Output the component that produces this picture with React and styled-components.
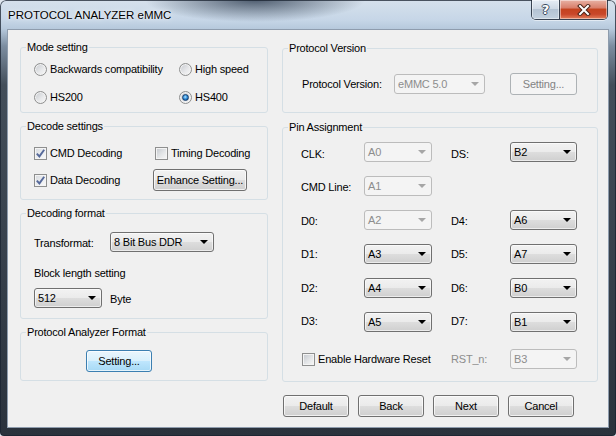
import React from "react";
import styled, { createGlobalStyle, css } from "styled-components";

const GlobalStyle = createGlobalStyle`
  html, body {
    margin: 0;
    padding: 0;
  }
  body {
    width: 616px;
    height: 436px;
    overflow: hidden;
    background: #dfe6ee;
    font-family: "Liberation Sans", Arial, sans-serif;
    font-size: 11px;
    letter-spacing: -0.2px;
    color: #000;
  }
`;

const Window = styled.div`
  width: 616px;
  height: 436px;
  box-sizing: border-box;
  display: flex;
  flex-direction: column;
  padding: 0 7px 8px 7px;
  border-radius: 6px 6px 4px 4px;
  box-shadow: inset 0 0 0 1px rgba(25, 35, 48, 0.75);
  background:
    radial-gradient(ellipse 110px 22px at 255px 0px, rgba(45, 60, 80, 0.8), rgba(45, 60, 80, 0) 100%),
    linear-gradient(180deg, #d6e1ec 0px, #c6d6e7 20px, #b6c9dc 29px, #7c8da0 46px, #434e5a 85px, #2a323c 100%);
`;

const TitleBar = styled.div`
  height: 29px;
  display: flex;
  justify-content: space-between;
  align-items: flex-start;
`;

const Title = styled.div`
  padding: 8px 0 0 1px;
  font-size: 11.5px;
  letter-spacing: 0;
  line-height: 14px;
  color: #000;
  text-shadow: 0 0 6px rgba(255, 255, 255, 0.9), 0 0 2px rgba(255, 255, 255, 0.8);
`;

const Caption = styled.div`
  display: flex;
  height: 19px;
  margin-right: 1px;
  border: 1px solid rgba(30, 40, 55, 0.85);
  border-top: none;
  border-radius: 0 0 5px 5px;
  overflow: hidden;
  box-shadow: 0 1px 0 rgba(255, 255, 255, 0.5);
`;

const CaptionButton = styled.div`
  width: ${(p) => p.$w}px;
  display: flex;
  align-items: center;
  justify-content: center;
  box-shadow: inset 0 0 0 1px rgba(255, 255, 255, 0.45);
  ${(p) =>
    p.$close
      ? css`
          background: linear-gradient(180deg, #e8b2a4 0%, #d9806c 40%, #c4431f 50%, #c9472a 75%, #e27f5c 100%);
        `
      : css`
          border-right: 1px solid rgba(30, 40, 55, 0.85);
          background: linear-gradient(180deg, #e6edf5 0%, #cfd9e5 45%, #b4c3d3 50%, #c3d1df 100%);
        `}
`;

const HelpGlyph = styled.span`
  font-family: "DejaVu Sans", sans-serif;
  font-weight: bold;
  font-size: 13px;
  line-height: 13px;
  color: #fff;
  text-shadow: -1px 0 #3b4a5e, 1px 0 #3b4a5e, 0 -1px #3b4a5e, 0 1px #3b4a5e;
`;

const Client = styled.div`
  flex: 1;
  box-sizing: border-box;
  border: 1px solid #8e9cad;
  background: #f0f0f0;
  display: grid;
  grid-template-columns: 248px 316px;
  grid-template-rows: auto auto;
  column-gap: 14px;
  align-content: start;
  padding: 17px 0 0 12px;
`;

const Column = styled.div`
  display: flex;
  flex-direction: column;
  gap: ${(p) => p.$gap}px;
  margin-top: ${(p) => p.$top || 0}px;
`;

const Group = styled.div`
  box-sizing: border-box;
  height: ${(p) => p.$h}px;
  border: 1px solid #d5dfe5;
  border-radius: 3px;
  padding-left: ${(p) => p.$pl || 0}px;
`;

const Legend = styled.div`
  display: table;
  margin: -7px 0 0 ${(p) => 5 - (p.$pl || 0)}px;
  padding: 0 1px;
  line-height: 13px;
  background: #f0f0f0;
`;

const RadioGrid = styled.div`
  display: grid;
  grid-template-columns: 145px auto;
  row-gap: 12px;
  margin-top: 7px;
`;

const DecodeGrid = styled.div`
  display: grid;
  grid-template-columns: 119px auto;
  grid-template-rows: 16px 22px;
  row-gap: 8px;
  align-items: center;
  margin-top: 12px;
`;

const Option = styled.label`
  display: flex;
  align-items: center;
  gap: 3px;
  height: 16px;
  white-space: nowrap;
  margin-left: ${(p) => p.$ml || 0}px;
  grid-column: ${(p) => p.$span || "auto"};
  color: ${(p) => (p.$disabled ? "#8d8d8d" : "#000")};
`;

const RadioDot = styled.span`
  flex: 0 0 13px;
  box-sizing: border-box;
  width: 13px;
  height: 13px;
  border-radius: 50%;
  border: 1px solid #8e8f8f;
  background: linear-gradient(135deg, #c6c9ce 0%, #e9eaec 60%, #f7f7f7 100%);
  box-shadow: inset 0 0 0 1px #f2f2f2;
  display: flex;
  align-items: center;
  justify-content: center;
  &::after {
    content: "";
    display: ${(p) => (p.$on ? "block" : "none")};
    width: 7px;
    height: 7px;
    box-sizing: border-box;
    border-radius: 50%;
    border: 1px solid #173f6d;
    background: radial-gradient(circle at 45% 40%, #bfe6ff 0%, #4aa3e6 35%, #1767b4 70%, #0b3f78 100%);
  }
`;

const Box = styled.span`
  flex: 0 0 13px;
  box-sizing: border-box;
  width: 13px;
  height: 13px;
  border: 1px solid #8e8f8f;
  background: linear-gradient(135deg, #c3c7cd 0%, #e4e6e8 55%, #f8f8f8 100%);
  box-shadow: inset 0 0 0 1px #f4f4f4;
  display: flex;
  align-items: center;
  justify-content: center;
  ${(p) =>
    p.$on &&
    css`
      background: linear-gradient(135deg, #d6d9de 0%, #eceef0 55%, #fafafa 100%);
    `}
`;

const Radio = ({ on, children }) => (
  <Option>
    <RadioDot $on={on} />
    {children}
  </Option>
);

const Check = ({ on, children, ml, span }) => (
  <Option $ml={ml} $span={span}>
    <Box $on={on}>
      {on && (
        <svg width="11" height="11" viewBox="0 0 11 11">
          <path d="M1.8 5.6 L4.4 8.4 L9.2 1.8" fill="none" stroke="#56699a" strokeWidth="1.9" />
        </svg>
      )}
    </Box>
    {children}
  </Option>
);

const Button = styled.button`
  box-sizing: border-box;
  width: ${(p) => p.$w}px;
  height: 22px;
  margin: ${(p) => p.$m || 0};
  padding: 0;
  font-family: inherit;
  font-size: 11px;
  letter-spacing: -0.2px;
  color: #000;
  border: 1px solid #707070;
  border-radius: 3px;
  background: linear-gradient(180deg, #f2f2f2 0%, #ebebeb 48%, #dddddd 52%, #cfcfcf 100%);
  box-shadow: inset 0 0 0 1px rgba(255, 255, 255, 0.7);
  ${(p) =>
    p.$hot &&
    css`
      border-color: #3c7fb1;
      background: linear-gradient(180deg, #eaf6fd 0%, #d9f0fc 48%, #bee6fd 52%, #a7d9f5 100%);
    `}
  ${(p) =>
    p.$disabled &&
    css`
      border-color: #adb2b5;
      background: #f4f4f4;
      color: #838383;
      box-shadow: none;
    `}
`;

const ComboBox = styled.div`
  box-sizing: border-box;
  width: ${(p) => p.$w}px;
  height: 20px;
  display: flex;
  align-items: center;
  justify-content: space-between;
  padding: 0 5px 0 3px;
  border: 1px solid #707070;
  border-radius: 3px;
  background: linear-gradient(180deg, #f2f2f2 0%, #ebebeb 48%, #dddddd 52%, #cfcfcf 100%);
  box-shadow: inset 0 0 0 1px rgba(255, 255, 255, 0.6);
  ${(p) =>
    p.$disabled &&
    css`
      border-color: #bcbcbc;
      background: #f4f4f4;
      color: #8d8d8d;
      box-shadow: none;
    `}
`;

const Arrow = styled.span`
  width: 0;
  height: 0;
  border-left: 4px solid transparent;
  border-right: 4px solid transparent;
  border-top: 4px solid ${(p) => (p.$disabled ? "#a6a6a6" : "#000")};
`;

const Combo = ({ value, w, disabled }) => (
  <ComboBox $w={w} $disabled={disabled}>
    <span>{value}</span>
    <Arrow $disabled={disabled} />
  </ComboBox>
);

const Row = styled.div`
  display: flex;
  align-items: center;
  height: ${(p) => p.$h || 20}px;
  margin-top: ${(p) => p.$mt || 0}px;
`;

const Text = styled.span`
  display: block;
  width: ${(p) => (p.$w ? `${p.$w}px` : "auto")};
  margin-left: ${(p) => p.$ml || 0}px;
  line-height: 16px;
  white-space: nowrap;
  color: ${(p) => (p.$disabled ? "#8d8d8d" : "#000")};
  padding-top: ${(p) => Math.max(0, (p.$dy || 0) * 2)}px;
  padding-bottom: ${(p) => Math.max(0, -(p.$dy || 0) * 2)}px;
`;

const PinList = styled.div`
  display: flex;
  flex-direction: column;
  gap: 14px;
  margin-top: 8px;
`;

const PinRow = styled.div`
  display: grid;
  grid-template-columns: 63px 87px 59px 67px;
  align-items: center;
  height: 20px;
  margin-top: ${(p) => p.$mt || 0}px;
`;

const Footer = styled.div`
  grid-column: 1 / span 2;
  display: flex;
  justify-content: flex-end;
  gap: 9px;
  margin-top: 13px;
  padding-right: 24px;
`;

const pins = [
  { l: "CLK:", a: "A0", ad: true, r: "DS:", b: "B2", dy: 2 },
  { l: "CMD Line:", a: "A1", ad: true, dy: 1 },
  { l: "D0:", a: "A2", ad: true, r: "D4:", b: "A6", dy: 1 },
  { l: "D1:", a: "A3", r: "D5:", b: "A7", dy: 0 },
  { l: "D2:", a: "A4", r: "D6:", b: "B0", dy: 0 },
  { l: "D3:", a: "A5", r: "D7:", b: "B1", dy: -1 },
];

const CloseIcon = () => (
  <svg width="14" height="12" viewBox="0 0 14 12">
    <path d="M3 2 L11 10 M11 2 L3 10" stroke="#4a2418" strokeWidth="4" strokeLinecap="square" />
    <path d="M3 2 L11 10 M11 2 L3 10" stroke="#ffffff" strokeWidth="2" strokeLinecap="square" />
  </svg>
);

export default function App() {
  return (
    <>
      <GlobalStyle />
      <Window>
        <TitleBar>
          <Title>PROTOCOL ANALYZER eMMC</Title>
          <Caption>
            <CaptionButton $w={27}>
              <HelpGlyph>?</HelpGlyph>
            </CaptionButton>
            <CaptionButton $w={47} $close>
              <CloseIcon />
            </CaptionButton>
          </Caption>
        </TitleBar>

        <Client>
          <Column $gap={13}>
            <Group $h={66} $pl={13}>
              <Legend $pl={13}>Mode setting</Legend>
              <RadioGrid>
                <Radio>Backwards compatibility</Radio>
                <Radio>High speed</Radio>
                <Radio>HS200</Radio>
                <Radio on>HS400</Radio>
              </RadioGrid>
            </Group>

            <Group $h={74} $pl={13}>
              <Legend $pl={13}>Decode settings</Legend>
              <DecodeGrid>
                <Check on>CMD Decoding</Check>
                <Check ml={2}>Timing Decoding</Check>
                <Check on>Data Decoding</Check>
                <Button $w={94}>Enhance Setting...</Button>
              </DecodeGrid>
            </Group>

            <Group $h={106} $pl={13}>
              <Legend $pl={13}>Decoding format</Legend>
              <Row $mt={12}>
                <Text $w={76} $dy={0.5}>Transformat:</Text>
                <Combo value="8 Bit Bus DDR" w={104} />
              </Row>
              <Row $mt={13} $h={16}>
                <Text>Block length setting</Text>
              </Row>
              <Row $mt={7}>
                <Combo value="512" w={68} />
                <Text $ml={8} $dy={1}>Byte</Text>
              </Row>
            </Group>

            <Group $h={49} $pl={65}>
              <Legend $pl={65}>Protocol Analyzer Format</Legend>
              <Button $w={66} $hot $m="11px 0 0 0">
                Setting...
              </Button>
            </Group>
          </Column>

          <Column $gap={14} $top={1}>
            <Group $h={65} $pl={19}>
              <Legend $pl={19}>Protocol Version</Legend>
              <Row $mt={18} $h={22}>
                <Text $w={92}>Protocol Version:</Text>
                <Combo value="eMMC 5.0" w={91} disabled />
                <Button $w={67} $disabled $m="0 0 0 25px">
                  Setting...
                </Button>
              </Row>
            </Group>

            <Group $h={255} $pl={18}>
              <Legend $pl={18}>Pin Assignment</Legend>
              <PinList>
                {pins.map((p) => (
                  <PinRow key={p.l}>
                    <Text $dy={p.dy}>{p.l}</Text>
                    <Combo value={p.a} w={68} disabled={p.ad} />
                    {p.r ? <Text $dy={p.dy}>{p.r}</Text> : <span />}
                    {p.b ? <Combo value={p.b} w={67} /> : <span />}
                  </PinRow>
                ))}
                <PinRow $mt={3}>
                  <Check ml={1} span="1 / span 2">
                    Enable Hardware Reset
                  </Check>
                  <Text $disabled>RST_n:</Text>
                  <Combo value="B3" w={67} disabled />
                </PinRow>
              </PinList>
            </Group>
          </Column>

          <Footer>
            <Button $w={66}>Default</Button>
            <Button $w={66}>Back</Button>
            <Button $w={66}>Next</Button>
            <Button $w={66}>Cancel</Button>
          </Footer>
        </Client>
      </Window>
    </>
  );
}
